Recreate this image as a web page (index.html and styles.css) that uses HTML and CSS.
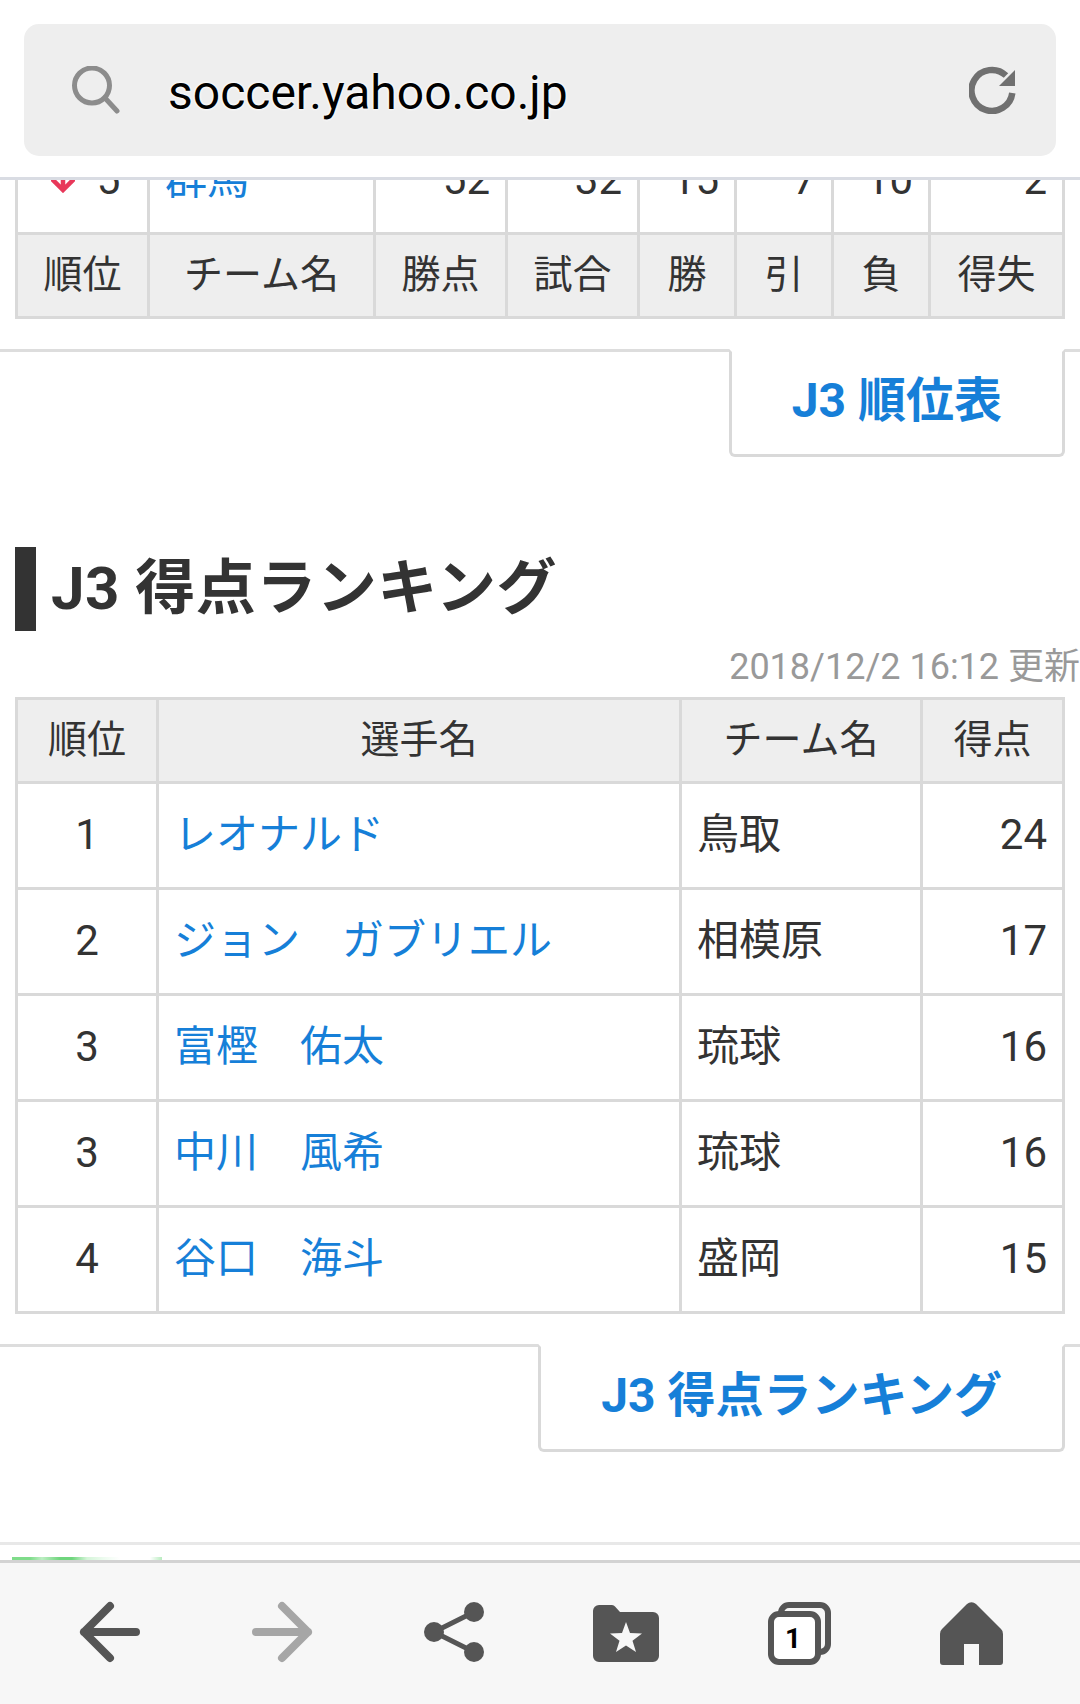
FILE: index.html
```html
<!DOCTYPE html>
<html lang="ja">
<head>
  <meta charset="UTF-8" />
  <meta name="viewport" content="width=device-width, initial-scale=1.0"/>
  <title>J3 得点ランキング</title>
  <link rel="stylesheet" href="styles.css">
</head>
<body>
  <!-- アドレスバー -->
  <header class="urlbar">
    <div class="urlbox">
      <svg class="url-icon" viewBox="0 0 48 48" width="48" height="48">
        <circle cx="20" cy="19.500" r="17.500" fill="none" stroke="#8c8c8c" stroke-width="5"/>
        <path d="M33 32 L45 45" fill="none" stroke="#8c8c8c" stroke-width="5" stroke-linecap="round"/>
      </svg>
      <span class="url-text">soccer.yahoo.co.jp</span>
      <svg class="url-icon" viewBox="0 0 48 48" width="48" height="48">
        <path d="M37 9.500 A20.500 20.500 0 1 0 43.300 27" fill="none" stroke="#707070" stroke-width="6.500"/>
        <path d="M46 4 V20 H30 Z" fill="#707070"/>
      </svg>
    </div>
  </header>

  <main class="content">
    <table class="rank standings">
      <colgroup>
        <col class="c-rank"><col class="c-team"><col class="c-num"><col class="c-num">
        <col class="c-sm"><col class="c-sm"><col class="c-sm"><col>
      </colgroup>
      <tbody>
        <tr>
          <td class="center">
            <svg class="down" viewBox="0 0 24 24" width="24" height="24">
              <path d="M12 0 V20 M0 9 L12 21 L24 9" fill="none" stroke="#e8385a" stroke-width="4.500"/>
            </svg>5
          </td>
          <td><a href="#">群馬</a></td>
          <td class="right">52</td>
          <td class="right">32</td>
          <td class="right">15</td>
          <td class="right">7</td>
          <td class="right">10</td>
          <td class="right">2</td>
        </tr>
      </tbody>
      <tfoot>
        <tr>
          <th>順位</th><th>チーム名</th><th>勝点</th><th>試合</th>
          <th>勝</th><th>引</th><th>負</th><th>得失</th>
        </tr>
      </tfoot>
    </table>

    <div class="more"><a href="#">J3 順位表</a></div>

    <h2 class="title">J3 得点ランキング</h2>
    <p class="updated">2018/12/2 16:12 更新</p>

    <table class="rank scorers">
      <colgroup>
        <col class="s-rank"><col class="s-name"><col class="s-team"><col>
      </colgroup>
      <thead>
        <tr><th>順位</th><th>選手名</th><th>チーム名</th><th>得点</th></tr>
      </thead>
      <tbody>
        <tr><td class="center">1</td><td><a href="#">レオナルド</a></td><td>鳥取</td><td class="right">24</td></tr>
        <tr><td class="center">2</td><td><a href="#">ジョン　ガブリエル</a></td><td>相模原</td><td class="right">17</td></tr>
        <tr><td class="center">3</td><td><a href="#">富樫　佑太</a></td><td>琉球</td><td class="right">16</td></tr>
        <tr><td class="center">3</td><td><a href="#">中川　風希</a></td><td>琉球</td><td class="right">16</td></tr>
        <tr><td class="center">4</td><td><a href="#">谷口　海斗</a></td><td>盛岡</td><td class="right">15</td></tr>
      </tbody>
    </table>

    <div class="more"><a href="#">J3 得点ランキング</a></div>

    <div class="divider"></div>
    <div class="next-strip"></div>
  </main>

  <!-- 下のツールバー -->
  <nav class="toolbar">
    <svg viewBox="0 0 72 72" width="72" height="72">
      <path d="M62 36 H10 M36 10 L10 36 L36 62" fill="none" stroke="#555" stroke-width="8" stroke-linecap="round" stroke-linejoin="round"/>
    </svg>
    <svg viewBox="0 0 72 72" width="72" height="72">
      <path d="M10 36 H62 M36 10 L62 36 L36 62" fill="none" stroke="#a6a6a6" stroke-width="8" stroke-linecap="round" stroke-linejoin="round"/>
    </svg>
    <svg viewBox="0 0 72 72" width="72" height="72">
      <path d="M56 16 L16 36 L56 56" fill="none" stroke="#555" stroke-width="5"/>
      <circle cx="16" cy="36" r="10" fill="#555"/>
      <circle cx="56" cy="16" r="10" fill="#555"/>
      <circle cx="56" cy="56" r="10" fill="#555"/>
    </svg>
    <svg viewBox="0 0 72 72" width="72" height="72">
      <path d="M9 9 H22 Q24 9 25 10.500 L30 16 H63 A6 6 0 0 1 69 22 V60 A6 6 0 0 1 63 66 H9 A6 6 0 0 1 3 60 V15 A6 6 0 0 1 9 9 Z" fill="#555"/>
      <path d="M36 26 L40 37 L52 37.500 L42.500 44.800 L46 56 L36 49.500 L26 56 L29.500 44.800 L20 37.500 L32 37 Z" fill="#f7f7f7"/>
    </svg>
    <svg viewBox="0 0 72 72" width="72" height="72">
      <rect x="19" y="9" width="47" height="47" rx="8" fill="none" stroke="#555" stroke-width="6"/>
      <rect x="9" y="18" width="47" height="48" rx="8" fill="#fff" stroke="#555" stroke-width="6"/>
      <text class="tab-count" x="31" y="52" text-anchor="middle">1</text>
    </svg>
    <svg viewBox="0 0 72 72" width="72" height="72">
      <path d="M33 8 A6.500 6.500 0 0 1 42 8 L67 33 A6 6 0 0 1 69 38 V66 A3 3 0 0 1 66 69 H45 V48 H30 V69 H9 A3 3 0 0 1 6 66 V38 A6 6 0 0 1 8 33 Z" fill="#555"/>
    </svg>
  </nav>
</body>
</html>
```

FILE: styles.css
```css
html, body {
  margin: 0;
  padding: 0;
}
body {
  width: 1080px;
  height: 1704px;
  display: flex;
  flex-direction: column;
  overflow: hidden;
  background: #fff;
  color: #333;
  font-family: Roboto, "Noto Sans CJK JP", sans-serif;
}
a {
  color: #167fd8;
  text-decoration: none;
}

/* address bar */
.urlbar {
  flex: none;
  height: 180px;
  padding: 24px;
  box-sizing: border-box;
  border-bottom: 3px solid #d9dce3;
}
.urlbox {
  height: 132px;
  padding: 0 39px 0 48px;
  display: flex;
  align-items: center;
  background: #eee;
  border-radius: 15px;
}
.url-text {
  flex: 1;
  margin-left: 48px;
  padding-top: 4px;
  font-size: 48px;
  color: #000;
  text-shadow: 0 0 3px #fff, 0 0 3px #fff;
}

/* content */
.content {
  flex: 1;
  min-height: 0;
  overflow: hidden;
}
.rank {
  width: 1050px;
  margin-left: 15px;
  table-layout: fixed;
  border-collapse: separate;
  border-spacing: 0;
  border-top: 3px solid #d9d9d9;
  border-left: 3px solid #d9d9d9;
}
.rank th, .rank td {
  border-right: 3px solid #d9d9d9;
  border-bottom: 3px solid #d9d9d9;
  box-sizing: border-box;
  overflow: hidden;
  white-space: nowrap;
}
.rank th {
  height: 84px;
  padding: 0 0 10px;
  background: #eee;
  font-size: 39px;
  font-weight: normal;
}
.rank td {
  height: 106px;
  padding: 0 15px 10px;
  font-size: 42px;
}
.rank td.center {
  padding-bottom: 3px;
  text-align: center;
}
.rank td.right {
  padding-bottom: 3px;
  text-align: right;
}

.standings { margin-top: -54px; }
.c-rank { width: 132px; }
.c-team { width: 226px; }
.c-num { width: 132px; }
.c-sm { width: 97px; }

.scorers { margin-top: 9px; }
.s-rank { width: 141px; }
.s-name { width: 523px; }
.s-team { width: 241px; }

.down {
  margin: 0 22px 0 6px;
  vertical-align: 1px;
}

.more {
  display: flex;
  justify-content: flex-end;
  margin-top: 30px;
  padding-right: 15px;
  border-top: 3px solid #ddd;
}
.more a {
  box-sizing: border-box;
  height: 108px;
  margin-top: -3px;
  padding: 0 60px 14px;
  display: flex;
  align-items: center;
  font-size: 48px;
  font-weight: bold;
  border: 3px solid #d9d9d9;
  border-top-color: #fff;
  border-radius: 0 0 6px 6px;
}

.title {
  box-sizing: border-box;
  margin: 90px 0 0 15px;
  padding: 0 0 13px 15px;
  height: 84px;
  display: flex;
  align-items: center;
  border-left: 21px solid #333;
  font-size: 60px;
  font-weight: bold;
  letter-spacing: 0.5px;
}
.updated {
  margin: 15px 0 0;
  text-align: right;
  white-space: nowrap;
  font-size: 36px;
  line-height: 42px;
  color: #999;
}

.divider {
  margin-top: 90px;
  height: 3px;
  background: #e8e8e8;
}
.next-strip {
  margin: 12px 0 0 12px;
  width: 150px;
  height: 3px;
  background: linear-gradient(90deg, #7fdc8a 0, #7fdc8a 12%, #bdeec3 20%, #6fd57d 32%, #6fd57d 40%, #d5f5d9 50%, #effcf1 62%, #fff 72%, #fff 92%, #b8ecbf 100%);
}

/* toolbar */
.toolbar {
  flex: none;
  height: 144px;
  box-sizing: border-box;
  padding: 33px 24px 0;
  display: grid;
  grid-template-columns: repeat(6, 1fr);
  justify-items: center;
  align-items: start;
  background: #f7f7f7;
  border-top: 3px solid #d3d3d3;
}
.tab-count {
  font-family: Roboto, sans-serif;
  font-size: 28px;
  font-weight: bold;
  fill: #000;
}
```
